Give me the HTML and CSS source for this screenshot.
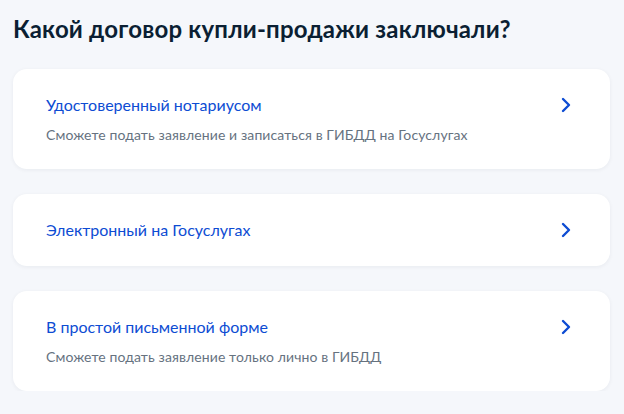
FILE: index.html
```html
<!DOCTYPE html>
<html lang="ru">
<head>
<meta charset="utf-8">
<link rel="stylesheet" href="styles.css">
</head>
<body>
<main class="page">
  <h1 class="heading">Какой договор купли-продажи заключали?</h1>
  <div class="list">
    <a class="card" href="#">
      <div class="card-body">
        <div class="card-title">Удостоверенный нотариусом</div>
        <div class="card-sub">Сможете подать заявление и записаться в ГИБДД на Госуслугах</div>
      </div>
      <svg class="chev" width="12" height="16" viewBox="0 0 12 16"><path d="M3 2 L9 8 L3 14" fill="none" stroke="#0d4cd3" stroke-width="2.4" stroke-linecap="round" stroke-linejoin="round"/></svg>
    </a>
    <a class="card" href="#">
      <div class="card-body">
        <div class="card-title">Электронный на Госуслугах</div>
      </div>
      <svg class="chev" width="12" height="16" viewBox="0 0 12 16"><path d="M3 2 L9 8 L3 14" fill="none" stroke="#0d4cd3" stroke-width="2.4" stroke-linecap="round" stroke-linejoin="round"/></svg>
    </a>
    <a class="card" href="#">
      <div class="card-body">
        <div class="card-title">В простой письменной форме</div>
        <div class="card-sub">Сможете подать заявление только лично в ГИБДД</div>
      </div>
      <svg class="chev" width="12" height="16" viewBox="0 0 12 16"><path d="M3 2 L9 8 L3 14" fill="none" stroke="#0d4cd3" stroke-width="2.4" stroke-linecap="round" stroke-linejoin="round"/></svg>
    </a>
  </div>
</main>
</body>
</html>
```

FILE: styles.css
```css
* { box-sizing: border-box; }
html, body { margin: 0; padding: 0; }
body {
  background: #f5f7fb;
  font-family: Lato, "Noto Sans", sans-serif;
  color: #0b1f33;
}
.page {
  padding: 12px 14px 0 13px;
}
.heading {
  margin: 0;
  font-size: 24px;
  line-height: 34px;
  font-weight: 700;
  letter-spacing: 0.2px;
  color: #0b1f33;
}
.list {
  margin-top: 23px;
  display: flex;
  flex-direction: column;
  gap: 25px;
}
.card {
  display: flex;
  align-items: flex-start;
  justify-content: space-between;
  background: #fff;
  border-radius: 14px;
  padding: 24px 38px 24px 33px;
  text-decoration: none;
  box-shadow: 0 1px 4px rgba(11, 31, 51, 0.06);
}
.card-body {
  display: flex;
  flex-direction: column;
  gap: 8px;
}
.card-title {
  font-size: 16px;
  line-height: 24px;
  color: #0d4cd3;
}
.card-sub {
  font-size: 14px;
  line-height: 20px;
  letter-spacing: 0.1px;
  color: #66727f;
}
.chev {
  margin-top: 4px;
  flex: none;
}
```
